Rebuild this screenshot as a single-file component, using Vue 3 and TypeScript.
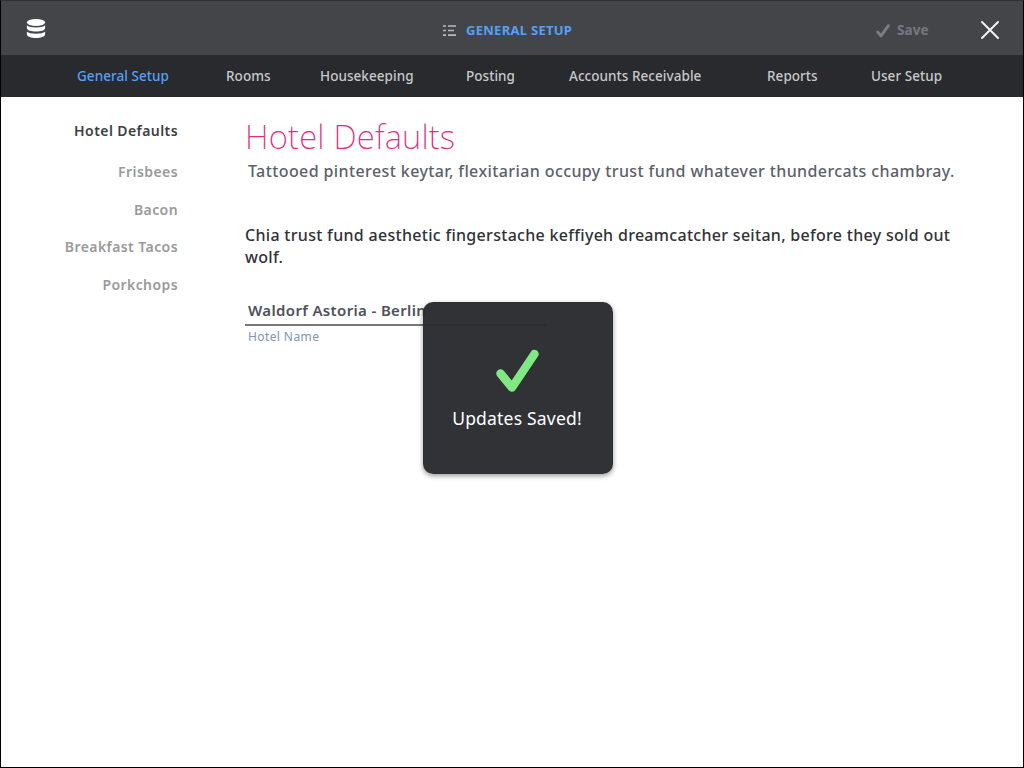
<script setup lang="ts">
import { ref } from 'vue'

const tabs: string[] = ['General Setup', 'Rooms', 'Housekeeping', 'Posting', 'Accounts Receivable', 'Reports', 'User Setup']
const sections: string[] = ['Hotel Defaults', 'Frisbees', 'Bacon', 'Breakfast Tacos', 'Porkchops']
const activeTab = ref(0)
const activeSection = ref(0)
</script>

<template>
  <div class="window">
    <header class="topbar">
      <svg class="logo" width="20" height="20" viewBox="0 0 20 20">
        <ellipse cx="10" cy="3.5" rx="9.1" ry="3.4" />
        <path d="M.9 6.200C3.500 9.200 16.500 9.200 19.100 6.200V9C19.100 13.700 .9 13.700 .9 9Z" />
        <path d="M.9 12.400C3.500 15.400 16.500 15.400 19.100 12.400V15.200C19.100 20.300 .9 20.300 .9 15.200Z" />
      </svg>
      <div class="heading">
        <svg width="13" height="12" viewBox="0 0 13 12">
          <path d="M0 1H3M5 1H13M0 5.500H3M5 5.500H11M0 10.200H3M5 10.200H13" />
        </svg>
        <span>GENERAL SETUP</span>
      </div>
      <div class="save">
        <svg width="14" height="14" viewBox="0 0 14 14"><path d="M1.800 8.200L5 11.800L12.200 1.800" /></svg>
        <span>Save</span>
      </div>
      <svg class="close" width="20" height="20" viewBox="0 0 20 20"><path d="M2 2L18 18M18 2L2 18" /></svg>
    </header>
    <nav class="tabs">
      <a v-for="(tab, i) in tabs" :key="tab" :class="{ active: i === activeTab }" @click="activeTab = i">{{ tab }}</a>
    </nav>
    <div class="body">
      <aside class="sections">
        <a v-for="(s, i) in sections" :key="s" :class="{ active: i === activeSection }" @click="activeSection = i">{{ s }}</a>
      </aside>
      <main class="content">
        <h1>Hotel Defaults</h1>
        <p class="lead">Tattooed pinterest keytar, flexitarian occupy trust fund whatever thundercats chambray.</p>
        <p class="text">Chia trust fund aesthetic fingerstache keffiyeh dreamcatcher seitan, before they sold out wolf.</p>
        <div class="field">
          <div class="value">Waldorf Astoria - Berlin</div>
          <div class="label">Hotel Name</div>
        </div>
      </main>
    </div>
    <div class="toast">
      <svg width="46" height="46" viewBox="0 0 46 46"><path d="M6.500 25.500L18 39.500L40.500 6" /></svg>
      <span>Updates Saved!</span>
    </div>
  </div>
</template>

<style>
body { margin: 0; background: #fff; }
</style>

<style scoped>
.window { position: relative; box-sizing: border-box; width: 1024px; height: 768px; overflow: hidden; border: 1px solid #000; border-top-color: #303136; background: #fff; font-family: "Noto Sans", "Open Sans", sans-serif; white-space: nowrap; }
.topbar { display: grid; grid-template-columns: 25px 417px 433px 104px 20px; height: 54px; background: #434549; box-sizing: border-box; }
.logo { grid-column: 2; margin-top: 18px; fill: #fff; }
.heading { display: flex; grid-column: 3; height: 20px; margin-top: 19px; line-height: 20px; font-size: 13px; font-weight: 700; letter-spacing: .28px; color: #56a0f6; }
.heading svg { margin: 5px 10px 0 0; stroke: #b8b9c6; stroke-width: 1.700; fill: none; }
.save { display: flex; grid-column: 4; height: 20px; margin-top: 19px; line-height: 20px; font-size: 13.500px; font-weight: 700; letter-spacing: .1px; color: #747981; }
.save svg { margin: 4px 7px 0 0; fill: none; stroke: #777e88; stroke-width: 3; stroke-linecap: round; stroke-linejoin: round; }
.close { grid-column: 5; margin-top: 19px; fill: none; stroke: #f4f2f0; stroke-width: 2; stroke-linecap: round; }
.tabs { display: grid; grid-template-columns: 149px 94px 146px 103px 198px 104px 100px; padding-left: 76px; height: 42px; line-height: 42px; background: #282a2e; color: #c7c8ca; font-size: 13.500px; font-weight: 500; letter-spacing: .05px; }
.tabs .active { color: #56a0f6; }
.body { display: flex; }
.sections { display: flex; flex-direction: column; box-sizing: border-box; width: 177px; padding-top: 24px; text-align: right; color: #9a9a9a; font-size: 14px; font-weight: 600; letter-spacing: .42px; line-height: 20px; }
.sections a { margin-bottom: 17.700px; }
.sections .active { color: #3e3f43; margin-bottom: 21px; }
.content { width: 720px; margin-left: 67px; padding-top: 18px; }
h1 { margin: 0; height: 44px; line-height: 44px; font-size: 33px; font-weight: 200; letter-spacing: .2px; color: #df2d7c; }
p { margin: 0; font-size: 16px; font-weight: 500; line-height: 22px; }
.lead { padding: 1px 0 0 3px; letter-spacing: .4px; color: #5d606b; }
.text { margin-top: 42px; white-space: normal; letter-spacing: .3px; color: #303236; }
.field { width: 302px; margin-top: 31px; }
.value { padding-left: 3px; height: 25px; line-height: 23px; border-bottom: 2px solid #77787a; font-size: 15px; font-weight: 600; letter-spacing: .35px; color: #505158; }
.label { padding-left: 3px; line-height: 21px; font-size: 12px; letter-spacing: .4px; color: #8293b5; }
.toast { position: absolute; left: 422px; top: 301px; width: 190px; height: 172px; box-sizing: border-box; padding-top: 46px; display: flex; flex-direction: column; align-items: center; border-radius: 10px; background: rgba(41, 42, 46, .96); box-shadow: 0 2px 5px rgba(0, 0, 0, .4); color: #fff; font-size: 17.500px; line-height: 24px; letter-spacing: .2px; }
.toast svg { margin: 0 2px 12px 0; fill: none; stroke: #80e984; stroke-width: 8.500; stroke-linecap: round; stroke-linejoin: round; }
.toast span { margin-right: 2px; }
</style>
